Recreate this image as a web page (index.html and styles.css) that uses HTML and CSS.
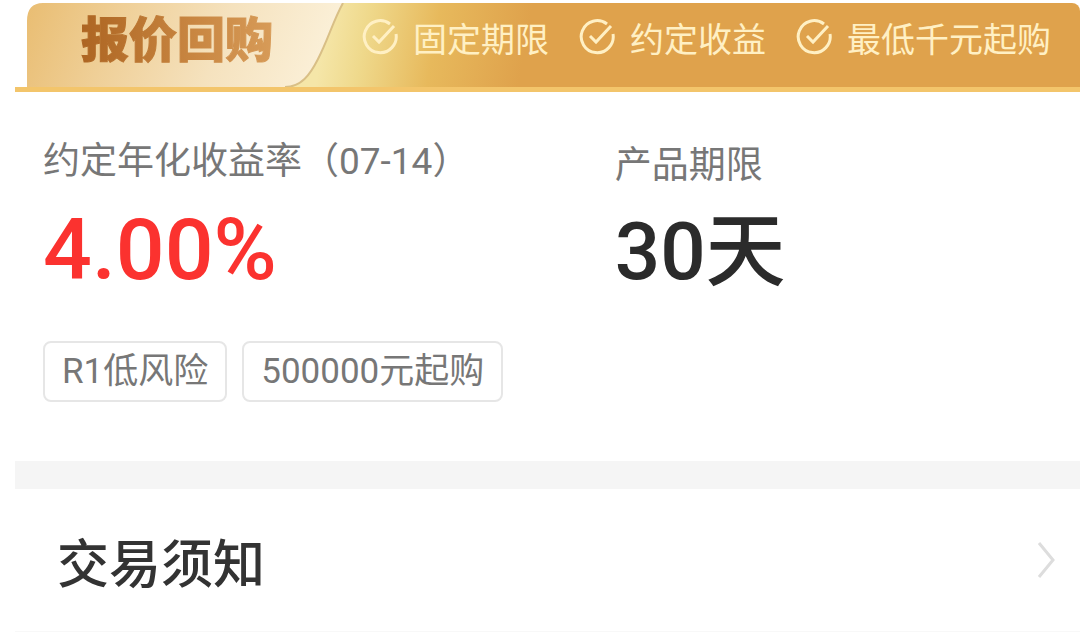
FILE: index.html
```html
<!DOCTYPE html>
<html lang="zh-CN">
<head>
    <meta charset="UTF-8">
    <meta name="viewport" content="width=device-width, initial-scale=1.0">
    <title>报价回购</title>
    <link rel="stylesheet" href="styles.css">
</head>
<body>
    <div class="container">
        <!-- Banner -->
        <header class="banner">
            <div class="banner-tab">
                <svg class="tab-shape" viewBox="0 0 324 84" preserveAspectRatio="none" aria-hidden="true">
                    <defs>
                        <linearGradient id="tabFill" x1="0" y1="0" x2="1" y2="0.1">
                            <stop offset="0" stop-color="#e9bd72"/>
                            <stop offset="0.3" stop-color="#efcf97"/>
                            <stop offset="0.65" stop-color="#f5e2be"/>
                            <stop offset="1" stop-color="#fbf0d8"/>
                        </linearGradient>
                    </defs>
                    <path d="M0 84V18Q0 0 16 0H316C306 18 301 37 291 56C283 72 274 84 258 84Z" fill="url(#tabFill)"/>
                    <path d="M316 0C306 18 301 37 291 56C283 72 274 84 258 84" fill="none" stroke="#d9bf86" stroke-width="2"/>
                </svg>
                <h1>报价回购</h1>
            </div>
            <ul class="features">
                <li>
                    <svg class="check" viewBox="0 0 36 36" aria-hidden="true"><path d="M28 5A16 16 0 1 0 34 15M11 17L17 23L32 7"/></svg>
                    固定期限
                </li>
                <li>
                    <svg class="check" viewBox="0 0 36 36" aria-hidden="true"><path d="M28 5A16 16 0 1 0 34 15M11 17L17 23L32 7"/></svg>
                    约定收益
                </li>
                <li>
                    <svg class="check" viewBox="0 0 36 36" aria-hidden="true"><path d="M28 5A16 16 0 1 0 34 15M11 17L17 23L32 7"/></svg>
                    最低千元起购
                </li>
            </ul>
        </header>

        <!-- Product -->
        <section class="product">
            <div class="metrics">
                <div class="metric">
                    <p class="label">约定年化收益率（07-14）</p>
                    <p class="value rate">4.00%</p>
                </div>
                <div class="metric">
                    <p class="label">产品期限</p>
                    <p class="value period">30天</p>
                </div>
            </div>
            <div class="tags">
                <span class="tag">R1低风险</span>
                <span class="tag">500000元起购</span>
            </div>
        </section>

        <!-- Trading notice -->
        <a class="notice" href="#notice">
            <span>交易须知</span>
            <svg class="arrow" viewBox="0 0 18 38" aria-hidden="true"><path d="M2 2L16 19L2 36"/></svg>
        </a>
    </div>
</body>
</html>
```
FILE: styles.css
```css
* {
    box-sizing: border-box;
}

body {
    font-family: Roboto, "Noto Sans CJK SC", sans-serif;
    background: #fff;
    color: #2b2b2b;
    margin: 0;
}

.container {
    padding: 3px 0 0 15px;
}

h1, p, ul {
    margin: 0;
    padding: 0;
}

/* Banner */
.banner {
    display: flex;
    padding-left: 12px;
    border-bottom: 5px solid #f3c56b;
    border-top-right-radius: 8px;
    background: linear-gradient(to right, #fff 12px, transparent 12px),
        linear-gradient(100deg, #f5e6a8 310px, #efd98c 350px, #e7b95c 420px, #dfa24c 510px);
}

.banner-tab {
    position: relative;
    flex: none;
    width: 324px;
    height: 84px;
    padding-left: 54px;
    background: linear-gradient(to right, #fff 30px, transparent 30px);
}

.tab-shape {
    position: absolute;
    inset: 0;
    width: 100%;
    height: 100%;
}

h1 {
    position: relative;
    width: max-content;
    font-size: 48px;
    font-weight: 900;
    line-height: 76px;
    color: transparent;
    background: linear-gradient(to right, #ad6522, #c98742 60%, #d79b58);
    -webkit-background-clip: text;
    background-clip: text;
    -webkit-text-stroke: 1px transparent;
}

.features {
    display: flex;
    gap: 30px;
    padding-left: 11px;
    list-style: none;
    white-space: nowrap;
}

.features li {
    display: flex;
    align-items: center;
    gap: 15px;
    height: 68px;
    font-size: 34px;
    color: #fff0c4;
}

.check {
    flex: none;
    width: 36px;
    height: 36px;
    fill: none;
    stroke: #fff0c4;
    stroke-width: 3;
}

/* Product */
.product {
    padding: 48px 8px 59px 28px;
    border-bottom: 28px solid #f5f5f5;
}

.metrics {
    display: grid;
    grid-template-columns: 5fr 4fr;
    align-items: end;
}

.label {
    margin-bottom: 14px;
    font-size: 37px;
    line-height: 44px;
    color: #777;
}

.value {
    font-weight: 500;
}

.rate {
    font-size: 86px;
    line-height: 104px;
    color: #fb322f;
}

.period {
    font-size: 80px;
    line-height: 100px;
}

.tags {
    display: flex;
    gap: 15px;
    margin-top: 39px;
}

.tag {
    padding: 0 17px;
    border: 2px solid #e6e6e6;
    border-radius: 8px;
    font-size: 35px;
    line-height: 57px;
    color: #777;
}

/* Trading notice */
.notice {
    display: flex;
    align-items: center;
    justify-content: space-between;
    height: 144px;
    padding: 0 25px 0 42px;
    border-bottom: 2px solid #f8f8f8;
    font-size: 52px;
    font-weight: 500;
    color: #333;
    text-decoration: none;
}

.arrow {
    width: 18px;
    height: 38px;
    fill: none;
    stroke: #ddd;
    stroke-width: 3;
}
```
